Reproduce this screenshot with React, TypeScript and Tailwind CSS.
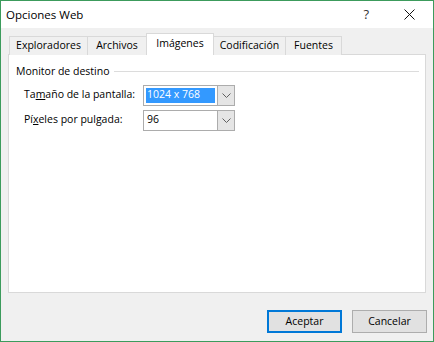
import React from 'react';

const tabs = [
  { label: 'Exploradores', width: 'w-[79px]' },
  { label: 'Archivos', width: 'w-[60px]' },
  { label: 'Imágenes', width: 'w-[68px]', active: true },
  { label: 'Codificación', width: 'w-[73px]' },
  { label: 'Fuentes', width: 'w-[57px]' },
];

const Chevron = () => (
  <svg width="9" height="5" viewBox="0 0 9 5" fill="none">
    <path d="M0.5 0.5 L4.5 4.5 L8.5 0.5" stroke="#606060" strokeWidth="1" />
  </svg>
);

const Combo = ({ value, selected }: { value: string; selected?: boolean }) => (
  <div className="flex h-[21px] w-[92px] border border-[#acacac] bg-white">
    <div className="flex flex-1 items-center p-[2px]">
      <span
        className={`flex h-full w-full items-center pl-[1px] ${
          selected ? 'bg-[#3399ff] text-white' : 'text-black'
        }`}
      >
        {value}
      </span>
    </div>
    <div className="flex w-[17px] items-center justify-center border-l border-[#acacac] bg-[#e5e5e5]">
      <Chevron />
    </div>
  </div>
);

export default function App() {
  return (
    <div
      className="flex h-[342px] w-[434px] flex-col border border-[#3c9b5c] bg-[#f0f0f0] text-[10.5px] text-black"
      style={{ fontFamily: '"Open Sans", "Noto Sans", sans-serif' }}
    >
      {/* barra de título */}
      <div className="flex h-[27px] items-center bg-white">
        <span className="pl-[5px] text-[11.5px]">Opciones Web</span>
        <span className="ml-auto mr-[35px] text-[13px] text-[#333]">?</span>
        <svg width="11" height="11" viewBox="0 0 11 11" className="mr-[18px]">
          <path d="M0.5 0.5 L10.5 10.5 M10.5 0.5 L0.5 10.5" stroke="#111" strokeWidth="1" />
        </svg>
      </div>

      {/* pestañas */}
      <div className="relative z-10 mt-[5px] -mb-px ml-[8px] flex h-[22px] items-end">
        {tabs.map((t, i) => (
          <div
            key={t.label}
            className={`${t.width} ${i > 0 ? '-ml-px' : ''} flex items-center justify-center border border-[#d9d9d9] ${
              t.active ? 'h-[22px] border-b-0 bg-white pb-[2px]' : 'h-[19px] border-b-0 bg-[#f0f0f0]'
            }`}
          >
            {t.label}
          </div>
        ))}
      </div>

      {/* panel */}
      <div className="ml-[7px] h-[239px] w-[418px] border border-[#d9d9d9] bg-white">
        <div className="mt-[9px] flex items-center pl-[7px] pr-[6px]">
          <span>Monitor de destino</span>
          <div className="ml-[5px] h-px flex-1 bg-[#dcdcdc]" />
        </div>
        <div className="mt-[5px] flex items-center pl-[15px]">
          <span className="w-[119px]">
            Ta<span className="underline">m</span>año de la pantalla:
          </span>
          <Combo value="1024 x 768" selected />
        </div>
        <div className="mt-[4px] flex items-center pl-[15px]">
          <span className="w-[119px]">
            Pí<span className="underline">x</span>eles por pulgada:
          </span>
          <Combo value="96" />
        </div>
      </div>

      {/* botones */}
      <div className="mt-[17px] flex justify-end gap-[10px] pr-[6px]">
        <button className="h-[23px] w-[75px] border-2 border-[#0078d7] bg-[#e1e1e1]">Aceptar</button>
        <button className="h-[23px] w-[75px] border border-[#adadad] bg-[#e1e1e1]">Cancelar</button>
      </div>
    </div>
  );
}
